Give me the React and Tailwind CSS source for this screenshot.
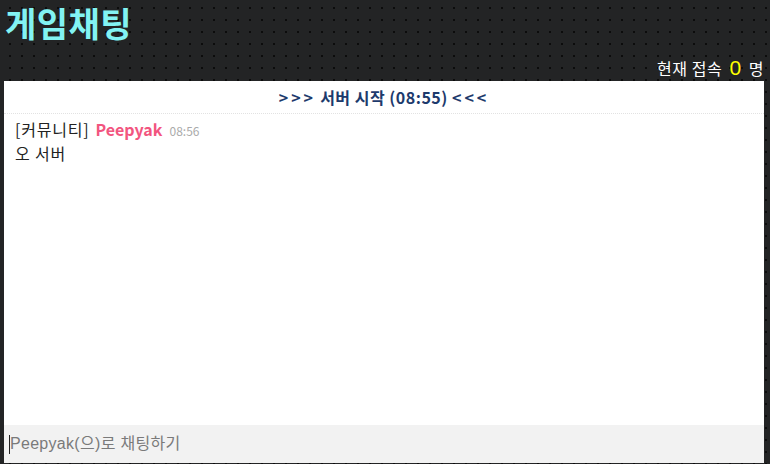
import React from 'react';

export default function App() {
  return (
    <div className="h-[464px] w-full overflow-hidden bg-[#232425] bg-[radial-gradient(circle,#0c0c0c_1.1px,transparent_1.3px)] bg-[length:12px_12px] bg-[position:4px_2px] flex flex-col font-['Noto_Sans_CJK_KR',sans-serif]">
      {/* Title */}
      <h1 className="pl-[5px] pr-2 text-[34px] leading-[46px] font-bold text-[#82f3f3] tracking-[0.5px] whitespace-nowrap">
        게임채팅
      </h1>

      {/* Online count */}
      <div className="h-[35px] flex items-end justify-end pr-[6px] pb-[2px] text-white text-[16px] leading-[22px] tracking-[0.6px]">
        <span>현재 접속</span>
        <span className="text-[#ffff00] text-[21px] mx-[7px] font-['Liberation_Sans',sans-serif]">0</span>
        <span>명</span>
      </div>

      {/* Chat panel */}
      <div className="mx-[4px] mr-[6px] h-[382px] bg-white flex flex-col">
        <div className="h-[33px] flex items-center justify-center border-b border-dotted border-[#e2e2e2]">
          <span className="text-[16px] font-bold text-[#1d3a6c] tracking-[0.5px]">
            <span className="tracking-[3px]">&gt;&gt;&gt;</span> 서버 시작 (08:55) <span className="tracking-[3px]">&lt;&lt;&lt;</span>
          </span>
        </div>

        <div className="flex-1 px-[11px] pt-[4px] text-[16px] leading-[22px] text-[#222]">
          <div className="flex items-baseline">
            <span className="tracking-[0.8px]">[커뮤니티]</span>
            <span className="ml-[6px] font-bold text-[#f2557f]">Peepyak</span>
            <span className="ml-[7px] text-[12px] text-[#aaa]">08:56</span>
          </div>
          <div className="tracking-[0.8px]">오 서버</div>
        </div>

        <div className="h-[38px] bg-[#f2f2f2] flex items-center pl-[5px]">
          <div className="w-px h-[19px] bg-[#222]" />
          <span className="text-[16px] text-[#7a7a7a] font-['Liberation_Sans','Noto_Sans_CJK_KR',sans-serif] tracking-[0.3px]">Peepyak(으)로 채팅하기</span>
        </div>
      </div>
    </div>
  );
}
